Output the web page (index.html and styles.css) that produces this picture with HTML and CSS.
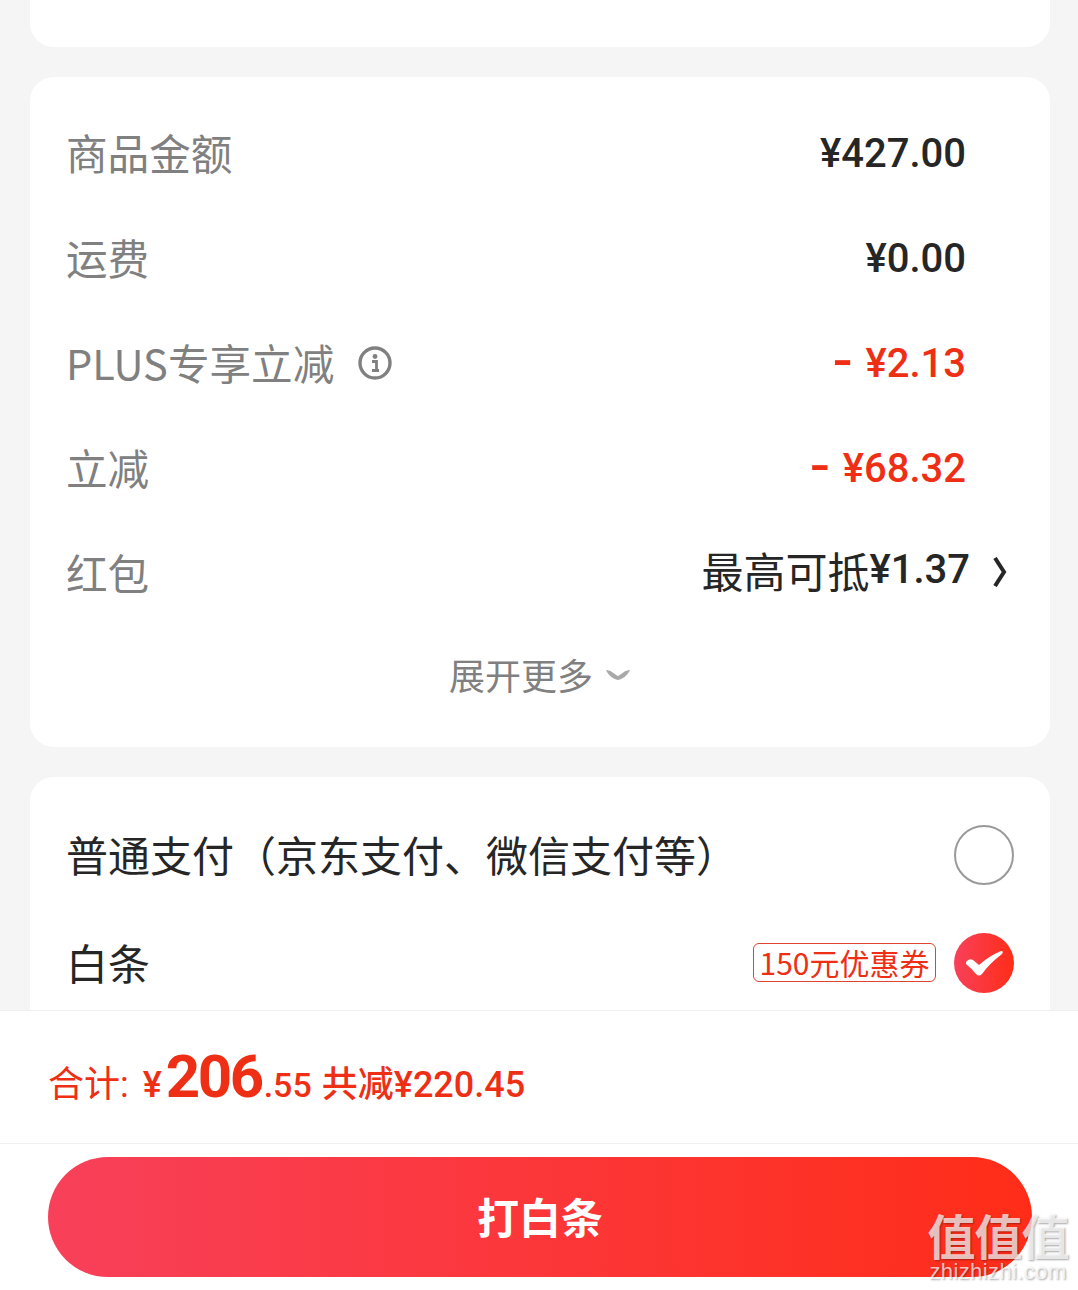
FILE: index.html
```html
<!DOCTYPE html>
<html lang="zh-CN">
  <head>
    <meta charset="UTF-8" />
    <meta name="viewport" content="width=device-width, initial-scale=1.0" />
    <title>确认订单</title>
    <link rel="stylesheet" href="styles.css">
  </head>
  <body>
    <div class="page">
      <div class="scroll">
        <div class="card card-cut"></div>

        <div class="card card-price">
          <div class="row">
            <span class="label">商品金额</span>
            <span class="amount">¥427.00</span>
          </div>
          <div class="row">
            <span class="label">运费</span>
            <span class="amount">¥0.00</span>
          </div>
          <div class="row">
            <span class="label label-icon">PLUS专享立减
              <svg class="info" viewBox="0 0 34 34" width="34" height="34">
                <circle cx="17" cy="17" r="15" fill="none" stroke="#808080" stroke-width="3.4" />
                <circle cx="17" cy="10.5" r="2.4" fill="#808080" />
                <path d="M14 15.5h4.5v8.5M14 24.5h7" fill="none" stroke="#808080" stroke-width="2.8" />
              </svg>
            </span>
            <span class="amount amount-red"><i class="minus">-</i>¥2.13</span>
          </div>
          <div class="row">
            <span class="label">立减</span>
            <span class="amount amount-red"><i class="minus">-</i>¥68.32</span>
          </div>
          <div class="row row-link">
            <span class="label">红包</span>
            <span class="amount amount-link">最高可抵<span class="num">¥1.37</span>
              <svg class="arrow" viewBox="0 0 16 30" width="16" height="30">
                <path d="M3 1l9 14-9 14" fill="none" stroke="#262626" stroke-width="4" />
              </svg>
            </span>
          </div>
          <div class="more">
            展开更多
            <svg viewBox="0 0 26 14" width="26" height="14">
              <path d="M1 3c5 0 8 4 12 6 4-2 7-6 12-6-2 5-7 9-12 10C8 12 3 8 1 3z" fill="#a8a8a8" />
            </svg>
          </div>
        </div>

        <div class="card card-pay">
          <div class="pay-row">
            <span class="pay-name">普通支付（京东支付、微信支付等）</span>
            <span class="radio"></span>
          </div>
          <div class="pay-row">
            <span class="pay-name">白条</span>
            <span class="pay-right">
              <span class="tag">150元优惠券</span>
              <span class="radio radio-on">
                <svg viewBox="0 0 60 60" width="60" height="60">
                  <path d="M12 29q3-4 7-2l6 5q10-9 22-14 3 0 1 3-12 9-20 20-3 3-6 0-5-6-10-10z" fill="#fff" />
                </svg>
              </span>
            </span>
          </div>
        </div>
      </div>

      <div class="footer">
        <div class="total">
          <span class="total-label">合计:</span>
          <span class="yen">¥</span><span class="big">206</span><span class="cents">.55</span>
          <span class="saved">共减¥220.45</span>
        </div>
        <div class="btn-wrap">
          <button class="btn">打白条</button>
        </div>
      </div>

      <div class="watermark">
        <div class="wm-mark">值值值</div>
        <div class="wm-url">zhizhizhi.com</div>
      </div>
    </div>
  </body>
</html>
```

FILE: styles.css
```css
/* Reset */
body,
button {
  margin: 0;
  padding: 0;
}

body {
  background-color: #f5f5f5;
  font-family: "Noto Sans CJK SC", "Noto Sans", sans-serif;
}

.page {
  position: relative;
  display: flex;
  flex-direction: column;
  height: 1290px;
  overflow: hidden;
}

.scroll {
  height: 1010px;
  overflow: hidden;
  padding: 0 28px 0 30px;
}

/* Cards */
.card {
  background-color: #fff;
  border-radius: 24px;
  margin-bottom: 30px;
}

.card-cut {
  height: 47px;
  border-radius: 0 0 24px 24px;
}

.card-price {
  height: 670px;
  padding-top: 25px;
  box-sizing: border-box;
}

.card-pay {
  padding-top: 24px;
  height: 300px;
  box-sizing: border-box;
}

/* Price rows */
.row {
  display: flex;
  justify-content: space-between;
  align-items: center;
  height: 105px;
  padding: 0 84px 0 36px;
}

.row-link {
  padding-right: 42px;
}

.label {
  font-size: 41.6px;
  color: #808080;
  margin-bottom: 6px;
}

.label-icon {
  display: flex;
  align-items: center;
}

.info {
  margin-left: 24px;
  margin-top: 2px;
}

.amount {
  font-family: Roboto, sans-serif;
  font-size: 40px;
  font-weight: 500;
  color: #262626;
  margin-top: -3px;
}

.amount-red {
  color: #ee2f15;
}

.minus {
  font-style: normal;
  font-size: 64px;
  font-weight: 400;
  line-height: 0;
  vertical-align: -5px;
  margin-right: 14px;
}

.amount-link {
  display: flex;
  align-items: center;
  font-family: "Noto Sans CJK SC", sans-serif;
  font-weight: 400;
  font-size: 42px;
  margin-top: -11px;
}

.num {
  font-family: Roboto, sans-serif;
  font-size: 40px;
  font-weight: 500;
}

.arrow {
  margin-left: 22px;
  margin-top: 6px;
}

.more {
  display: flex;
  justify-content: center;
  align-items: center;
  gap: 12px;
  height: 94px;
  padding-bottom: 6px;
  font-size: 36px;
  color: #808080;
}

/* Payment rows */
.pay-row {
  display: flex;
  justify-content: space-between;
  align-items: center;
  height: 108px;
  padding: 0 36px 0 36px;
}

.pay-name {
  font-size: 42px;
  color: #262626;
  margin-bottom: 4px;
}

.pay-right {
  display: flex;
  align-items: center;
  gap: 18px;
}

.tag {
  box-sizing: border-box;
  height: 39px;
  line-height: 36px;
  width: 183px;
  margin-bottom: 2px;
  text-align: center;
  font-size: 30px;
  color: #ee2f15;
  border: 1px solid #e0442e;
  border-radius: 6px;
  white-space: nowrap;
}

.radio {
  box-sizing: border-box;
  display: block;
  width: 60px;
  height: 60px;
  border: 2px solid #999;
  border-radius: 50%;
}

.radio-on {
  border: 0;
  background: linear-gradient(90deg, #f8405a, #ff2d18);
}

.radio-on svg {
  display: block;
}

/* Footer */
.footer {
  flex: 1;
  background-color: #fff;
  border-top: 1px solid #f0f0f0;
}

.total {
  box-sizing: border-box;
  height: 133px;
  padding: 4px 0 0 48px;
  display: flex;
  align-items: baseline;
  line-height: 124px;
  color: #ee2f15;
  border-bottom: 1px solid #f0f0f0;
  font-family: Roboto, "Noto Sans CJK SC", sans-serif;
  white-space: nowrap;
}

.total-label {
  font-size: 36px;
  margin-right: 14px;
}

.yen {
  font-size: 36px;
  font-weight: 500;
}

.big {
  font-size: 60px;
  font-weight: 700;
  letter-spacing: -2.5px;
  margin-left: 4px;
}

.cents {
  font-size: 34px;
  font-weight: 500;
  margin-left: 2px;
  margin-right: 10px;
}

.saved {
  font-size: 36px;
  font-weight: 500;
}

.btn-wrap {
  padding: 13px 46px 0 48px;
}

.btn {
  display: block;
  width: 100%;
  height: 120px;
  padding-bottom: 3px;
  border: 0;
  border-radius: 60px;
  background: linear-gradient(90deg, #f8405a, #ff2d18);
  color: #fff;
  font-family: "Noto Sans CJK SC", sans-serif;
  font-size: 42px;
  font-weight: 700;
}

/* Watermark sits over the button */
.watermark {
  position: absolute;
  right: 8px;
  bottom: 6px;
  width: 144px;
  text-align: center;
  color: rgba(255, 255, 255, 0.72);
  text-shadow: 1px 1px 2px rgba(0, 0, 0, 0.35);
}

.wm-mark {
  font-size: 48px;
  line-height: 52px;
  font-weight: 700;
  letter-spacing: -1px;
}

.wm-url {
  font-family: "Liberation Sans", sans-serif;
  font-size: 22px;
  line-height: 24px;
  letter-spacing: 0.4px;
}
```
